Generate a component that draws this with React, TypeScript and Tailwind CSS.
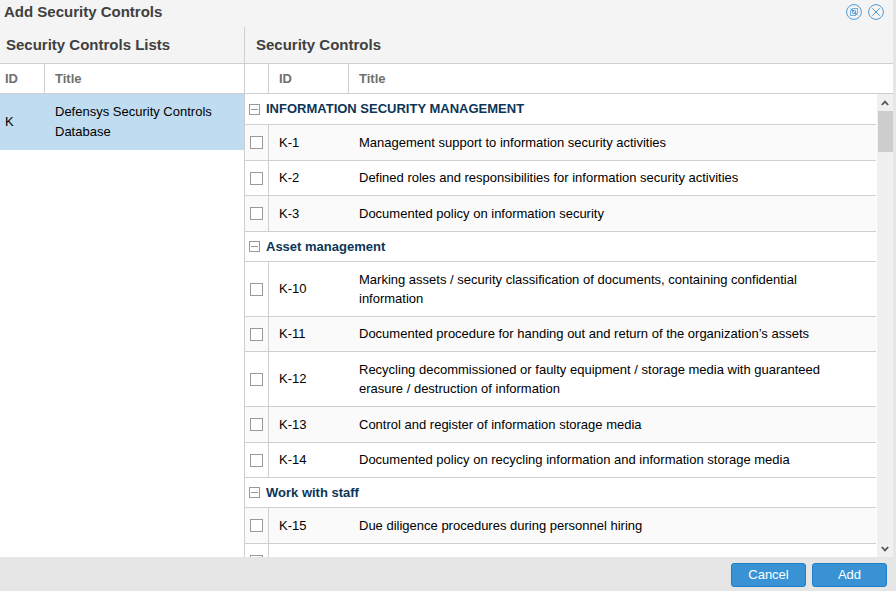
import React from "react";

type Group = { kind: "group"; title: string; h: string; ls: string };
type Item = { kind: "item"; id: string; lines: string[]; h: string; ls: string; alt?: boolean };
type Row = Group | Item;

const rows: Row[] = [
  { kind: "group", title: "INFORMATION SECURITY MANAGEMENT", h: "h-[31px]", ls: "tracking-normal" },
  { kind: "item", id: "K-1", lines: ["Management support to information security activities"], h: "h-[36px]", ls: "tracking-normal", alt: true },
  { kind: "item", id: "K-2", lines: ["Defined roles and responsibilities for information security activities"], h: "h-[35px]", ls: "tracking-normal" },
  { kind: "item", id: "K-3", lines: ["Documented policy on information security"], h: "h-[36px]", ls: "tracking-normal", alt: true },
  { kind: "group", title: "Asset management", h: "h-[30px]", ls: "tracking-normal" },
  { kind: "item", id: "K-10", lines: ["Marking assets / security classification of documents, containing confidential", "information"], h: "h-[55px]", ls: "tracking-normal" },
  { kind: "item", id: "K-11", lines: ["Documented procedure for handing out and return of the organization’s assets"], h: "h-[35px]", ls: "tracking-normal", alt: true },
  { kind: "item", id: "K-12", lines: ["Recycling decommissioned or faulty equipment / storage media with guaranteed", "erasure / destruction of information"], h: "h-[55px]", ls: "tracking-normal" },
  { kind: "item", id: "K-13", lines: ["Control and register of information storage media"], h: "h-[36px]", ls: "tracking-normal", alt: true },
  { kind: "item", id: "K-14", lines: ["Documented policy on recycling information and information storage media"], h: "h-[35px]", ls: "tracking-normal" },
  { kind: "group", title: "Work with staff", h: "h-[30px]", ls: "tracking-normal" },
  { kind: "item", id: "K-15", lines: ["Due diligence procedures during personnel hiring"], h: "h-[36px]", ls: "tracking-normal", alt: true },
  { kind: "item", id: "K-16", lines: ["Employee job termination procedures, prohibiting further technical job access. For"], h: "h-[36px]", ls: "tracking-normal" },
];

function RowView({ row }: { row: Row }) {
  if (row.kind === "group") {
    return (
      <div className={`flex shrink-0 items-center border-b border-[#cfcfcf] bg-white pl-1 ${row.h}`}>
        <svg width="11" height="11" viewBox="0 0 11 11" fill="none" stroke="#999" shapeRendering="crispEdges">
          <path d="M.5.5h10v10H.5zM2 5.5h7" />
        </svg>
        <span className={`ml-1.5 font-bold whitespace-nowrap text-[#0b3556] ${row.ls}`}>{row.title}</span>
      </div>
    );
  }
  return (
    <div className={`flex shrink-0 items-stretch border-b border-[#cfcfcf] ${row.alt ? "bg-[#fafafa]" : "bg-white"} ${row.h}`}>
      <div className="flex w-6 shrink-0 items-center border-r border-[#cfcfcf] pl-[5px]">
        <span className="size-[13px] border border-[#999] bg-white" />
      </div>
      <div className="flex w-20 shrink-0 items-center pl-2.5">{row.id}</div>
      <div className={`flex flex-col justify-center pl-2.5 leading-[19.5px] whitespace-nowrap ${row.ls}`}>
        {row.lines.map((l) => (
          <span key={l}>{l}</span>
        ))}
      </div>
    </div>
  );
}

export default function App() {
  return (
    <div className="flex h-[591px] w-[896px] overflow-hidden bg-[#e6e6e6] font-['Liberation_Sans',Arial,sans-serif] text-[13px] text-black">
      <div className="flex w-[893px] flex-col bg-white">
        <header className="flex h-[27px] shrink-0 items-start justify-between bg-[#f4f4f4] pr-[9px] pl-1">
          <h1 className="mt-px text-[15px] leading-[22px] font-bold text-[#404040]">Add Security Controls</h1>
          <div className="mt-1 flex gap-1.5">
            <svg width="16" height="16" viewBox="0 0 16 16" fill="none" stroke="#5299d0">
              <circle cx="8" cy="8" r="7.4" />
              <path d="M4.5 6.5v5h5M6.5 4.5h5v5M4.5 6.5h5v5M6.5 4.5v5h5M4.5 4.5l7 7" strokeWidth=".8" />
            </svg>
            <svg width="16" height="16" viewBox="0 0 16 16" fill="none" stroke="#5299d0">
              <circle cx="8" cy="8" r="7.4" />
              <path d="M4.3 4.3l7.4 7.4M11.7 4.3l-7.4 7.4" />
            </svg>
          </div>
        </header>

        <main className="flex h-[530px] shrink-0">
          <section className="flex w-[244px] shrink-0 flex-col">
            <h2 className="h-9 bg-[#f4f4f4] pl-1.5 text-[15px] leading-9 font-bold text-[#404040]">Security Controls Lists</h2>
            <div className="flex h-[31px] border-y border-[#cfcfcf] leading-[29px] font-bold text-[#707070]">
              <div className="w-[45px] border-r border-[#cfcfcf] pl-[5px]">ID</div>
              <div className="pl-2.5">Title</div>
            </div>
            <div className="flex h-14 items-center bg-[#c0dcf1]">
              <div className="w-[45px] pl-[5px]">K</div>
              <div className="pl-2.5 leading-5">
                Defensys Security Controls
                <br />
                Database
              </div>
            </div>
          </section>

          <section className="flex min-w-0 flex-1 flex-col border-l border-[#cfcfcf]">
            <h2 className="h-9 shrink-0 bg-[#f4f4f4] pl-[11px] text-[15px] leading-9 font-bold text-[#404040]">Security Controls</h2>
            <div className="flex h-[31px] shrink-0 border-y border-[#cfcfcf] leading-[29px] font-bold text-[#707070]">
              <div className="w-6 border-r border-[#cfcfcf]" />
              <div className="w-20 border-r border-[#cfcfcf] pl-2.5">ID</div>
              <div className="pl-2.5">Title</div>
            </div>
            <div className="flex min-h-0 flex-1">
              <div className="flex w-[631px] shrink-0 flex-col overflow-hidden">
                {rows.map((r) => (
                  <RowView key={r.kind === "group" ? r.title : r.id} row={r} />
                ))}
              </div>
              <div className="ml-px flex w-4 flex-col items-center bg-[#f0f0f0]">
                <svg className="mt-1.5 shrink-0" width="8" height="6" viewBox="0 0 8 6" fill="none" stroke="#555" strokeWidth="1.8">
                  <path d="M.8 5 4 1.6 7.2 5" />
                </svg>
                <div className="mt-[5px] h-[41px] w-[15px] bg-[#cdcdcd]" />
                <svg className="mt-auto mb-[5px] shrink-0" width="8" height="6" viewBox="0 0 8 6" fill="none" stroke="#555" strokeWidth="1.8">
                  <path d="M.8 1 4 4.4 7.2 1" />
                </svg>
              </div>
            </div>
          </section>
        </main>

        <footer className="flex flex-1 items-start justify-end gap-1.5 bg-[#e6e6e6] pt-1.5 pr-1.5">
          <button className="h-6 w-[75px] rounded-[3px] border border-[#1c7fcb] bg-[#3892d4] text-white">Cancel</button>
          <button className="h-6 w-[75px] rounded-[3px] border border-[#1c7fcb] bg-[#3892d4] text-white">Add</button>
        </footer>
      </div>
    </div>
  );
}
